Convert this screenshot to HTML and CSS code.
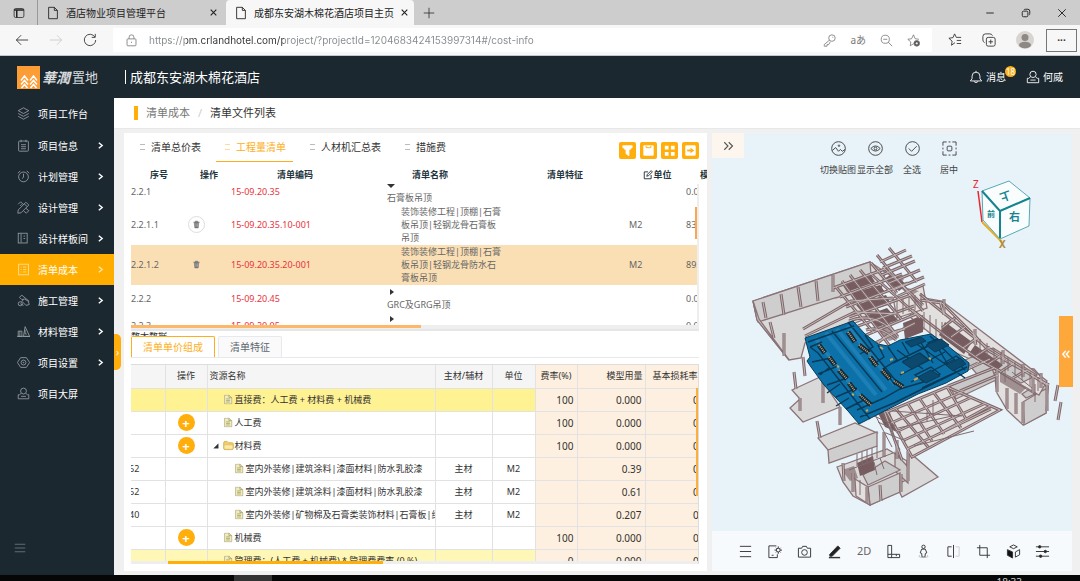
FILE: index.html
```html
<!DOCTYPE html>
<html lang="zh-CN">
<head>
    <meta charset="UTF-8">
    <meta name="viewport" content="width=device-width, initial-scale=1.0">
    <title>成都东安湖木棉花酒店项目主页</title>
    <link rel="stylesheet" href="styles.css">
</head>
<body>
    <!-- Icone condivise -->
    <svg class="sprite" aria-hidden="true">
        <symbol id="i-page" viewBox="0 0 16 16"><path d="M3 1.5h6.5L13 5v9.5H3zM9.5 1.5V5H13"/></symbol>
        <symbol id="i-close" viewBox="0 0 16 16"><path d="M3 3l10 10M13 3L3 13"/></symbol>
        <symbol id="i-arrow" viewBox="0 0 16 16"><path d="M5 3l6 5-6 5"/></symbol>
        <symbol id="i-user" viewBox="0 0 16 16"><circle cx="8" cy="5" r="3.6"/><path d="M5 8L3 9.5H1.5v5h13v-5H13L11 8M5 11.5h6"/></symbol>
        <symbol id="i-file" viewBox="0 0 16 16"><path d="M2.5 1h7L14 5v10h-11.500z" fill="#f1ecc0" stroke="#a8a070"/><path d="M5 7h6M5 9.500h6M5 12h6M9.500 1v4H14" stroke="#8c9250"/></symbol>
        <symbol id="i-folder" viewBox="0 0 16 16"><path d="M1 4q0-2 2-2h3l2 2h5q2 0 2 2v6q0 2-2 2H3q-2 0-2-2z" fill="#f0cf68" stroke="#c9a13c"/><path d="M1.500 7h13v5q0 1.500-2 1.500h-9q-2 0-2-1.500z" fill="#fbeaa6" stroke="#dcb95a"/></symbol>
        <symbol id="i-trash" viewBox="0 0 16 16"><path d="M2 4h12M6 4V2h4v2M4 4l1 10h6l1-10z" fill="#777"/><path d="M7 6v6M9.500 6v6" stroke="#ccc"/></symbol>
    </svg>

    <!-- Schede del browser -->
    <div class="tabbar">
        <button class="tab-menu" aria-label="标签操作"><svg viewBox="0 0 16 16"><rect x="1.500" y="2" width="13" height="12" rx="2"/><path d="M1.500 4h13M5 5v9" stroke-width="2"/></svg></button>
        <div class="tab">
            <svg viewBox="0 0 16 16"><use href="#i-page"/></svg><span>酒店物业项目管理平台</span>
            <button aria-label="关闭"><svg viewBox="0 0 16 16"><use href="#i-close"/></svg></button>
        </div>
        <div class="tab tab-active">
            <svg viewBox="0 0 16 16"><use href="#i-page"/></svg><span>成都东安湖木棉花酒店项目主页</span>
            <button aria-label="关闭"><svg viewBox="0 0 16 16"><use href="#i-close"/></svg></button>
        </div>
        <button class="tab-new" aria-label="新建标签"><svg viewBox="0 0 16 16"><path d="M8 1v14M1 8h14"/></svg></button>
        <div class="window-buttons">
            <button aria-label="最小化"><svg viewBox="0 0 16 16"><path d="M2 8h12"/></svg></button>
            <button aria-label="还原"><svg viewBox="0 0 16 16"><rect x="2" y="5" width="9" height="9" rx="2"/><path d="M5 3q0-1 2-1h4q3 0 3 3v4q0 2-1 2"/></svg></button>
            <button aria-label="关闭窗口"><svg viewBox="0 0 16 16"><path d="M2 2l12 12M14 2L2 14"/></svg></button>
        </div>
    </div>

    <!-- Barra degli indirizzi -->
    <div class="toolbar">
        <button aria-label="返回"><svg viewBox="0 0 16 16"><path d="M15 8H1.500M7 2.500L1.500 8 7 13.500"/></svg></button>
        <button class="off" aria-label="前进"><svg viewBox="0 0 16 16"><path d="M1 8h13.500M9 2.500L14.500 8 9 13.500"/></svg></button>
        <button aria-label="刷新"><svg viewBox="0 0 16 16"><path d="M13.500 4.500A6.500 6.500 0 1 0 14.500 8M14 1v4h-4"/></svg></button>
        <div class="address">
            <svg viewBox="0 0 16 16"><rect x="2.500" y="6" width="11" height="8.500" rx="1"/><path d="M5 6V4q0-3 3-3t3 3v2M8 9.500v1.500"/></svg>
            <input type="text" class="url" aria-label="地址" value="https://pm.crlandhotel.com/project/?projectId=1204683424153997314#/cost-info">
            <button aria-label="密码"><svg viewBox="0 0 16 16"><circle cx="11" cy="5" r="4"/><path d="M8 7.500L1.500 13v2H5v-2h2l2-3.500M11.500 4h1"/></svg></button>
            <button class="lang" aria-label="翻译">aあ</button>
            <button aria-label="缩小"><svg viewBox="0 0 16 16"><circle cx="6.500" cy="6.500" r="5"/><path d="M4 6.500h5M10 10l5 5"/></svg></button>
            <button aria-label="收藏"><svg viewBox="0 0 16 16"><path d="M8 12l-4 2.500.7-4.700L1 6.500l4.700-.7L8 1l2 4.800 4.700.7"/><circle cx="12" cy="11.500" r="3.500" fill="#555"/><path d="M10.500 11.500h3M12 10v3" stroke="#fff"/></svg></button>
        </div>
        <div class="browser-tools">
            <button aria-label="收藏夹"><svg viewBox="0 0 16 16"><path d="M8 11l-4 3 .7-4.700L1 6l4.700-.7L7.500 1l2 4h5.500M10 8.500h5M10 12h5"/></svg></button>
            <button aria-label="集锦"><svg viewBox="0 0 16 16"><rect x="5" y="5" width="10" height="10" rx="2"/><path d="M10 7.500v5M7.500 10h5M3 11Q1 10 1 8V4q0-3 3-3h5q2 0 3 2"/></svg></button>
            <button class="avatar" aria-label="个人资料"><svg viewBox="0 0 18 18"><circle cx="9" cy="9" r="9" fill="#d8d4cf"/><circle cx="9" cy="6.500" r="3.500" fill="#8d8883"/><ellipse cx="9" cy="14" rx="6" ry="3.200" fill="#8d8883"/></svg></button>
            <button class="more" aria-label="更多">···</button>
        </div>
    </div>

    <!-- Intestazione -->
    <header class="header">
        <a class="logo" href="#" aria-label="华润置地">
            <svg viewBox="0 0 23 23"><rect width="23" height="23" fill="#fd9d35"/><path d="M4 14.500l3.500-4.500 3.500 4.500M4 18.500l3.500-4 3.500 4M4.500 22l3-3.500 3 3.500M13 14.500l3.500-4.500 3.500 4.500M13 18.500l3.500-4 3.500 4M13.500 22l3-3.500 3 3.500" fill="none" stroke="#fff" stroke-width="1.500"/></svg>
            <b>華潤</b><span>置地</span>
        </a>
        <h1>成都东安湖木棉花酒店</h1>
        <a class="header-link messages" href="#"><svg viewBox="0 0 16 16"><path d="M1.500 12.500h13L12.500 10V7q0-4.500-4.500-4.500T3.500 7v3zM8 1v1.500M5.500 13q2.500 3 5 0"/></svg>消息<i>18</i></a>
        <a class="header-link" href="#"><svg viewBox="0 0 16 16"><use href="#i-user"/></svg>何威</a>
    </header>

    <div class="layout">
        <nav class="sidebar">
            <a class="first" href="#"><svg viewBox="0 0 16 16"><path d="M8 1l6.500 3.500L8 8 1.500 4.500zM1.500 8L8 11.500 14.500 8M1.500 11.500L8 15l6.500-3.500"/></svg>项目工作台</a>
            <a href="#"><svg viewBox="0 0 16 16"><rect x="2" y="2.500" width="12" height="12.500" rx="1"/><path d="M5 1v3M11 1v3M5 7h6M5 9.500h6M5 12h6"/></svg>项目信息<svg class="arrow" viewBox="0 0 16 16"><use href="#i-arrow"/></svg></a>
            <a href="#"><svg viewBox="0 0 16 16"><circle cx="8" cy="8.500" r="6"/><path d="M8 4.500V9l-2 1.500M1 4l3-3M15 4l-3-3"/></svg>计划管理<svg class="arrow" viewBox="0 0 16 16"><use href="#i-arrow"/></svg></a>
            <a href="#"><svg viewBox="0 0 16 16"><path d="M11 1.500L14.500 5 5 14.500l-4 .5.500-4zM1.500 4l3-3 3.500 3.500M4 6l2-2M11 9l3.500 3-3 3L8 12M9 3.500L12.500 7"/></svg>设计管理<svg class="arrow" viewBox="0 0 16 16"><use href="#i-arrow"/></svg></a>
            <a href="#"><svg viewBox="0 0 16 16"><rect x="1.500" y="1.500" width="11" height="12"/><path d="M5 2v11M8 5h2M8 8h2"/></svg>设计样板间<svg class="arrow" viewBox="0 0 16 16"><use href="#i-arrow"/></svg></a>
            <a class="active" href="#"><svg viewBox="0 0 16 16"><rect x="2" y="1.500" width="12" height="13"/><path d="M4.500 5h1M7.500 5h4M4.500 8h1M7.500 8h4M4.500 11h1M7.500 11h4"/></svg>清单成本<svg class="arrow" viewBox="0 0 16 16"><use href="#i-arrow"/></svg></a>
            <a href="#"><svg viewBox="0 0 16 16"><circle cx="4" cy="12" r="2.500"/><path d="M3 4l3-2.500 9 7.500M3 4l3 3 2-1M6 9l5 5 4-1-1-4-5-3zM4 12l4 2"/></svg>施工管理<svg class="arrow" viewBox="0 0 16 16"><use href="#i-arrow"/></svg></a>
            <a href="#"><svg viewBox="0 0 16 16"><path d="M1.500 7.500H6V14H1.500zM8 14l2-12 5.500 12zM3.500 7.500V14M10 6v5h2M0 14h16"/></svg>材料管理<svg class="arrow" viewBox="0 0 16 16"><use href="#i-arrow"/></svg></a>
            <a href="#"><svg viewBox="0 0 16 16"><path d="M4.500 2h7L15.500 8l-4 6h-7L.5 8z"/><circle cx="8" cy="8" r="3"/><circle cx="8" cy="8" r=".5"/></svg>项目设置<svg class="arrow" viewBox="0 0 16 16"><use href="#i-arrow"/></svg></a>
            <a href="#"><svg viewBox="0 0 16 16"><use href="#i-user"/></svg>项目大屏</a>
            <button class="menu-toggle" aria-label="折叠菜单"><svg viewBox="0 0 16 16"><path d="M1 3h14M1 8h14M1 13h14"/></svg></button>
        </nav>

        <main class="main">
            <div class="breadcrumb"><a href="#">清单成本</a><i>/</i><span>清单文件列表</span></div>
            <button class="side-handle" aria-label="展开">›</button>

            <div class="work">
                <section class="lists">
                    <!-- Elenco principale -->
                    <div class="list-top">
                        <div class="list-tabs">
                            <button>清单总价表</button>
                            <button class="selected">工程量清单</button>
                            <button>人材机汇总表</button>
                            <button>措施费</button>
                        </div>
                        <div class="actions">
                            <button aria-label="筛选"><svg viewBox="0 0 16 16"><path d="M3 3h10v1.500L9.500 8v5.500l-3-2V8L3 4.500z" fill="#fff"/></svg></button>
                            <button aria-label="保存"><svg viewBox="0 0 16 16"><path d="M3 3h10v10H3z" fill="#fff"/><path d="M5.500 3v2h5V3" stroke="#ffae0c"/></svg></button>
                            <button aria-label="视图"><svg viewBox="0 0 16 16"><path d="M3 3h4v4H3zM9.500 3h4v4h-4zM3 9.500h4v4H3zM9.500 9.500h4v4h-4z" fill="#fff" stroke="none"/></svg></button>
                            <button aria-label="导出"><svg viewBox="0 0 16 16"><path d="M3 3h10v10H3z" fill="#fff"/><path d="M4.500 8h4" stroke="#ffae0c" stroke-width="2"/><path d="M8 5l4 3-4 3z" fill="#ffae0c" stroke="none"/></svg></button>
                        </div>
                    </div>
                    <div class="bill">
                        <table class="bill-table bill-head">
                            <colgroup><col class="c-no"><col class="c-op"><col class="c-code"><col class="c-name"><col class="c-code"><col class="c-unit"><col class="c-qty"></colgroup>
                            <tr><th>序号</th><th>操作</th><th>清单编码</th><th>清单名称</th><th>清单特征</th><th><svg viewBox="0 0 16 16"><path d="M8 3H2v11h11V8M6 10l1-3 6-6 2 2-6 6z"/></svg>单位</th><th class="left">模型量</th></tr>
                        </table>
                        <div class="bill-scroll">
                            <table class="bill-table">
                                <colgroup><col class="c-no"><col class="c-op"><col class="c-code"><col class="c-name"><col class="c-code"><col class="c-unit"><col class="c-qty"></colgroup>
                                <tr><td>2.2.1</td><td></td><td class="red">15-09.20.35</td><td class="parent"><i class="down"></i>石膏板吊顶</td><td></td><td></td><td>0.000</td></tr>
                                <tr><td>2.2.1.1</td><td><button class="trash ring" aria-label="删除"><svg viewBox="0 0 16 16"><use href="#i-trash"/></svg></button></td><td class="red">15-09.20.35.10-001</td><td class="child">装饰装修工程|顶棚|石膏板吊顶|轻钢龙骨石膏板吊顶</td><td></td><td>M2</td><td>83.20</td></tr>
                                <tr class="current"><td>2.2.1.2</td><td><button class="trash" aria-label="删除"><svg viewBox="0 0 16 16"><use href="#i-trash"/></svg></button></td><td class="red">15-09.20.35.20-001</td><td class="child">装饰装修工程|顶棚|石膏板吊顶|轻钢龙骨防水石膏板吊顶</td><td></td><td>M2</td><td>89.40</td></tr>
                                <tr><td>2.2.2</td><td></td><td class="red">15-09.20.45</td><td class="parent"><i class="next"></i>GRC及GRG吊顶</td><td></td><td></td><td>0.000</td></tr>
                                <tr><td>2.2.3</td><td></td><td class="red">15-09.20.05</td><td class="parent"><i class="next"></i>其他吊顶</td><td></td><td></td><td>0.000</td></tr>
                            </table>
                            <div class="bill-thumb"></div>
                        </div>
                        <div class="bill-track"><div></div></div>
                    </div>
                    <div class="splitter"></div>

                    <!-- Dettaglio del prezzo -->
                    <div class="total">数大数据</div>
                    <div class="detail-tabs">
                        <button class="selected">清单单价组成</button>
                        <button>清单特征</button>
                    </div>
                    <div class="grid">
                        <table>
                            <colgroup><col class="g-code"><col class="g-op"><col class="g-name"><col class="g-main"><col class="g-unit"><col class="g-rate"><col class="g-qty"><col class="g-loss"></colgroup>
                            <tr><th></th><th>操作</th><th class="left">资源名称</th><th>主材/辅材</th><th>单位</th><th class="cream">费率(%)</th><th class="cream right">模型用量</th><th class="cream loss">基本损耗率</th></tr>
                            <tr class="yellow"><td></td><td></td><td class="lv1"><svg viewBox="0 0 16 16"><use href="#i-file"/></svg>直接费：人工费 + 材料费 + 机械费</td><td></td><td></td><td>100</td><td>0.000</td><td>0.000</td></tr>
                            <tr><td></td><td><button class="add" aria-label="添加">+</button></td><td class="lv1"><svg viewBox="0 0 16 16"><use href="#i-file"/></svg>人工费</td><td></td><td></td><td>100</td><td>0.000</td><td>0.000</td></tr>
                            <tr><td></td><td><button class="add" aria-label="添加">+</button></td><td class="open"><svg class="fold" viewBox="0 0 16 16"><path d="M14 2v12H2z"/></svg><svg class="folder" viewBox="0 0 16 16"><use href="#i-folder"/></svg>材料费</td><td></td><td></td><td>100</td><td>0.000</td><td>0.000</td></tr>
                            <tr><td>62</td><td></td><td class="lv2"><svg viewBox="0 0 16 16"><use href="#i-file"/></svg>室内外装修|建筑涂料|漆面材料|防水乳胶漆</td><td>主材</td><td>M2</td><td></td><td>0.39</td><td>0.000</td></tr>
                            <tr><td>62</td><td></td><td class="lv2"><svg viewBox="0 0 16 16"><use href="#i-file"/></svg>室内外装修|建筑涂料|漆面材料|防水乳胶漆</td><td>主材</td><td>M2</td><td></td><td>0.61</td><td>0.000</td></tr>
                            <tr><td>40</td><td></td><td class="lv2"><svg viewBox="0 0 16 16"><use href="#i-file"/></svg>室内外装修|矿物棉及石膏类装饰材料|石膏板|纸面</td><td>主材</td><td>M2</td><td></td><td>0.207</td><td>0.000</td></tr>
                            <tr><td></td><td><button class="add" aria-label="添加">+</button></td><td class="lv1"><svg viewBox="0 0 16 16"><use href="#i-file"/></svg>机械费</td><td></td><td></td><td>100</td><td>0.000</td><td>0.000</td></tr>
                            <tr class="yellow pale"><td></td><td></td><td class="lv1"><svg viewBox="0 0 16 16"><use href="#i-file"/></svg>管理费：(人工费 + 机械费) * 管理费费率 (0 %)</td><td></td><td></td><td>0</td><td>0.000</td><td>0.000</td></tr>
                        </table>
                        <div class="grid-thumb-y"></div>
                        <div class="grid-track"><div></div></div>
                    </div>
                </section>

                <!-- Vista del modello -->
                <section class="viewer">
                    <div class="stage">
                        <svg class="model" viewBox="712 133 360 398" role="img" aria-label="三维模型">
                            <defs>
                                <path id="beams-top" d="M871 263l26 30M877 255l46 56M889 248l28 34M883 267l40 38M870 273l50 45M860 270l42 50M850 275l48 62M842 281l50 68M836 287l38 46M880 262l26-12M883 268l29-12M882 275l33-14M889 283l31-13M893 290l31-13M898 296l27-12M833 288l52-19M840 297l62-23M846 307l62-24M849 317l62-22M858 326l56-20M866 335l50-21M875 343l40-20M803 329l48-28 42-3M805 336l50-24 44 2M849 321q25-10 46 12M866 330q15-5 30 10M878 343q12-12 27-14"/>
                                <path id="beams-right" d="M920 294l30 24 35 28 62 39M912 310l34 26 34 24 20 11M920 300l22 3 33 33 14 15 60 34M940 302l4 12M973 332l3 13M955 318l-13 10M965 327l-14 10M977 338l-14 10M990 347l-14 9M1002 355l-14 9M1014 363l-14 9M1027 370l-14 8"/>
                                <path id="beams-stair" d="M887 412l60-25 53 23-88 47zM896 409l32 38M908 404l24 37M920 399l24 35M934 393l27 35M947 387l19 32M891 423l73-32M896 432l76-35M902 441l84-38M907 449l84-40M948 386l46-18M960 391l38-16M887 412l-12-10M944 431l46-25M882 405l20 55M946 379l44-20M932 385l46-22"/>
                                <path id="posts" d="M763 302l3 16M781 294l3 21M798 287l3 20M816 281l2 20M833 275v17M784 333v23M770 322l4 16M794 372l2 17M800 398v13M823 376v27M817 421l3 17M840 407v18M843 463l1 18M853 473v19M867 487v16M880 485l1 16M901 474v18M884 432v25M897 440v19M908 451v30M997 370v22M1007 388v21M1016 393v21M1023 402v21M1047 383v28M1058 385l-3 16M1061 402l-3 18M944 299v16M975 329v15M1003 350v14M1023 364v13M1041 373v15M1033 374v18M803 357l2 19"/>
                            </defs>

                            <!-- solai e pareti -->
                            <g class="slabs">
                                <path d="M753 301l117-39 15 10-10 43-70 28-4 15-12 2-32-40z"/>
                                <path class="wall" d="M753 301l117-39 2 27-37 9-77 24z"/>
                                <path class="wall" d="M753 301l6 18 30 41-32-40z"/>
                                <path d="M792 390l28-13 20 30-37 15-13-14 10-9z"/>
                                <path d="M818 438l37-15 22 10-49 17z"/>
                                <path class="wall" d="M828 450l49-18v14l-48 17z"/>
                                <path d="M837 467l50-18 20 12-2 28-35 16-17-9-10-14z"/>
                                <path d="M909 452l29 25-36 20-6-12 12-6z"/>
                                <path class="wall" d="M895 453l13 14v16l-13-12z"/>
                                <path class="wall" d="M868 487l32-14v19l-30 13z"/>
                                <path class="light" d="M855 479l13 8 2 18-14-9z"/>
                                <path class="floor" d="M863 475l22-14 15 9-32 15z"/>
                                <path d="M887 412l60-25 53 23-88 47z" class="light"/>
                                <path d="M993 366l4 27 10 17 16 15 23-12 2-28-14-16z" class="light"/>
                                <path class="wall" d="M1023 402l25-15-2 26-22 12z"/>
                                <path class="floor" d="M1022 394l19-12 7 6-22 10z"/>
                                <path class="light" d="M912 296l30 5 105 80-8 14-42-24-45-20-42-34z"/>
                                <path class="floor" d="M965 360l28-12 44 27-16 8-22-12-18 8z"/>
                                <path class="floor" d="M950 386l42-18 4 12-40 19z"/>
                                <path class="light" d="M893 298l30-12 4 22-30 10z"/>
                            </g>
                            <path class="shade" d="M842 284l28-10 5 8-28 10zM850 294l30-9 5 7-30 10zM856 305l30-10 5 9-28 9zM865 316l22-8 11 12-20 7zM893 273l14 12-8 6-15-12zM903 323l20-8v17l-18 7zM945 322l27 20-8 12-25-19zM975 345l28 20-7 6-28-16zM872 401l17 9 8 22-12-5zM857 463l16-7 2 14-15 6z"/>
                            <path class="shade" d="M885 271l19 8-5 8zM897 285l22 6-9 5zM876 327l13 14 10-3-12-13zM1000 372l26 16-6 6-20-12zM842 470l12-4 4 12-8 3z" opacity=".6"/>

                            <!-- travi: bordo scuro e anima chiara -->
                            <g class="beam-edge"><use href="#beams-top"/><use href="#beams-right"/><use href="#beams-stair"/><use href="#posts"/></g>
                            <g class="beam-core"><use href="#beams-top"/><use href="#beams-right"/><use href="#beams-stair"/><use href="#posts"/></g>
                            <path class="thin" d="M897 301v15M903 299v15M909 297v15M915 295v15M921 293v15M924 312v18M930 315v19M936 319v18M942 322v19M980 339v14M987 343v14M994 348v14M1001 352v14M1008 357v14M1015 362v13M1022 366v14M1030 372v14M1038 377v14M857 454v12M862 452v12M867 450v12M872 448v12M877 446v12M849 470l44-17M860 480v15M874 462l3 13M880 458l4 11M1000 373l36 22M1012 372l20 16M1005 368v14M1035 384v18M892 411l70 5M898 428l54-12M914 446l60-15M933 400v16M927 412v9M872 409l20 38M877 400l23 50M884 412l-10 4 22 10M878 422l23 11M886 433l20 8"/>

                            <!-- controsoffitto selezionato -->
                            <g class="ceiling">
                                <path d="M805 338l48-17 12 13 13 10 10 2 12-6 31-6 17 12 21 17-1 8-22 12-28 11-59 30-11-13-24-26-13-18-4-6 3-4z"/>
                                <path class="stripe" d="M826 333l50 62M837 329l49 61M847 326l48 59M815 338l52 67"/>
                                <path class="dark" d="M832 331l50 61M808 342l46-16M810 347l8 6 52 66M812 362l19-4M818 374l20-8M827 385l20-7M836 397l21-9M846 409l20-10M860 417l34-14 73-36M857 410l27-12 16-9 27-8M822 342l-12 5M830 367l-10 8M840 384l-13 9M849 398l-13 8M848 322l52 64M865 335l8 12-13 7M878 345l6 12-12 8M888 347l9 13-14 9 12 16M911 340l54 38M930 336l35 34M897 350l26 19M893 363l37-18M900 375l45-23M911 382l44-23M922 388l45-21M902 342l7 12M920 341l13 22M938 348l12 20M904 361l16-8 9 7-16 8zM915 375l16-8 9 7-16 8zM928 343l9-4 7 5-9 5zM944 363l12-7 7 5-13 7z"/>
                                <path class="block" d="M905 342l16-5 5 4-15 6zM926 345l15-6 8 6-14 7zM902 362l17-9 9 7-16 9zM946 365l14-7 6 6-13 7zM918 377l13-7 9 6-14 7z"/>
                                <path class="duct-edge" d="M819 345l6 8M829 357l6 8M839 370l8 9M849 383l6 8M860 395l11 10M848 332l7 10M859 345l10 8M870 357l7 9M882 370l8 9M894 381l9 6"/>
                                <path class="duct" d="M819 345l6 8M829 357l6 8M839 370l8 9M849 383l6 8M860 395l11 10M848 332l7 10M859 345l10 8M870 357l7 9M882 370l8 9M894 381l9 6"/>
                                <path class="spots" d="M837 366l2 1M852 394l2 1M880 347l3 2M890 360l3-1M901 373l3-1M914 380l4-2M929 358l2 1M866 411l2-1"/>
                            </g>

                            <!-- cubo di orientamento -->
                            <path d="M978 191l4 31" stroke="#e8262b" stroke-width="1.500"/>
                            <path d="M982 222l20 20" stroke="#e9ad22" stroke-width="2"/>
                            <g class="cube">
                                <path d="M982 191l27-10 21 17-30 13z"/>
                                <path d="M982 191l18 20v28l-17-19z"/>
                                <path d="M1000 211l30-13-1 28-29 13z"/>
                                <path class="cube-edge" d="M982 191l18 20 30-13M1000 211v27"/>
                            </g>
                            <text class="axis-z" x="973" y="188">Z</text>
                            <text class="axis-x" x="999" y="248">X</text>
                            <text class="face" x="1009" y="221">右</text>
                            <text class="face" x="-5" y="4" transform="translate(1006 196) rotate(160)">上</text>
                            <text class="face face-small" x="987" y="217">前</text>
                        </svg>
                        <div class="stage-top">
                            <button class="expand" aria-label="收起"><svg viewBox="0 0 16 16"><path d="M3 3l5 5-5 5M9 3l5 5-5 5"/></svg></button>
                            <div class="view-tools">
                                <button><svg viewBox="0 0 16 16"><circle cx="8" cy="8" r="7.300"/><path d="M1.500 10l3.500-3 3 4 2-2 2 2 3-2"/><circle cx="8.500" cy="5" r=".8"/></svg>切换贴图</button>
                                <button><svg viewBox="0 0 16 16"><circle cx="8" cy="8" r="7.300"/><path d="M3 8q5-5.500 10 0-5 5.500-10 0z"/><circle cx="8" cy="8" r="1.500"/></svg>显示全部</button>
                                <button><svg viewBox="0 0 16 16"><circle cx="8" cy="8" r="7.300"/><path d="M4 8l3 3 5.500-5.500"/></svg>全选</button>
                                <button><svg viewBox="0 0 16 16"><path d="M1 5V1h4M7 1h2M11 1h4v4M15 7v2M15 11v4h-4M9 15H7M5 15H1v-4M1 9V7"/><rect x="5.500" y="5.500" width="5" height="5" rx="1"/></svg>居中</button>
                            </div>
                        </div>
                        <button class="right-handle" aria-label="打开面板">«</button>
                    </div>
                    <div class="stage-bar">
                        <button aria-label="列表"><svg viewBox="0 0 16 16"><path d="M2 2.500h12M2 8h12M2 13.500h12"/></svg></button>
                        <button aria-label="属性"><svg viewBox="0 0 16 16"><path d="M10 2H2v12.500h9V11M5 12h2"/><circle cx="12" cy="6.500" r="2"/><path d="M12 2.500v2M12 8.500v2M8 6.500h2M14 6.500h2M9.500 4l1 1M13.500 8l1 1M14.500 4l-1 1M10.500 8l-1 1"/></svg></button>
                        <button aria-label="截图"><svg viewBox="0 0 16 16"><path d="M1.500 4.500H5L6 2.500h4l1 2h3.500v9.500h-13z"/><circle cx="8" cy="9" r="3"/></svg></button>
                        <button aria-label="标注"><svg viewBox="0 0 16 16"><path d="M3 11l8.500-9 2.500 2.500L5.500 13H3z" fill="#222"/><path d="M2 14.500h12" stroke-width="1.500"/></svg></button>
                        <button class="two-d">2D</button>
                        <button aria-label="测量"><svg viewBox="0 0 16 16"><path d="M2 1.500h4V11h8.500v3.500H2zM2 11h4v3.500M11 11v2"/></svg></button>
                        <button aria-label="漫游"><svg viewBox="0 0 16 16"><circle cx="8" cy="3" r="1.800"/><path d="M6 5.500h4l1.500 4-1.500.5-.5 4h-3L6 10l-1.500-.5z"/><path d="M4 12q-3 2 4 2.500 7-.5 4-2.500" stroke="#bbb"/></svg></button>
                        <button aria-label="剖切"><svg viewBox="0 0 16 16"><path d="M6 3H2v10h4M8 1v14"/><path d="M10 3h4v10h-4" stroke="#ccc"/></svg></button>
                        <button aria-label="裁剪"><svg viewBox="0 0 16 16"><path d="M4 1v11h11M1 4h11v11"/></svg></button>
                        <button aria-label="构件"><svg viewBox="0 0 16 16"><path d="M8 1l4 2-4 2-4-2z"/><path d="M1.500 6L7 8.500V15l-5.500-3z" fill="#111"/><path d="M14.500 6L10 8.500V14l4.500-2.500z"/></svg></button>
                        <button aria-label="设置"><svg viewBox="0 0 16 16"><path d="M1 3h14M1 8h14M1 13h14"/><circle cx="5" cy="3" r="1.300" fill="#222"/><circle cx="11" cy="8" r="1.300" fill="#222"/><circle cx="6" cy="13" r="1.300" fill="#222"/></svg></button>
                    </div>
                </section>
            </div>
        </main>
    </div>
    <div class="taskbar"><div class="task"></div><span>18:33</span></div>
</body>
</html>
```

FILE: styles.css
```css
* {
    box-sizing: border-box;
}
body {
    margin: 0;
    height: 100vh;
    display: flex;
    flex-direction: column;
    overflow: hidden;
    font-family: "Noto Sans", "Noto Sans CJK SC", sans-serif;
    font-size: 10px;
    line-height: 16px;
    color: #333;
}
button {
    border: 0;
    padding: 0;
    background: none;
    font: inherit;
    color: inherit;
    display: flex;
    align-items: center;
    justify-content: center;
    cursor: pointer;
}
a {
    color: inherit;
    text-decoration: none;
}
i {
    font-style: normal;
}
svg {
    width: 12px;
    height: 12px;
    flex: none;
    fill: none;
    stroke: currentColor;
}
.sprite {
    position: absolute;
    width: 0;
    height: 0;
}

/* browser */
.tabbar {
    display: flex;
    align-items: stretch;
    flex: none;
    height: 25px;
    background: #cdcdcd;
    color: #222;
}
.tab-menu {
    width: 38px;
    border-right: 1px solid #999;
}
.tab {
    display: flex;
    align-items: center;
    width: 188px;
    padding: 0 8px;
    gap: 6px;
}
.tab svg {
    width: 14px;
    height: 14px;
}
.tab span {
    white-space: nowrap;
}
.tab button {
    margin-left: auto;
}
.tab button svg {
    width: 9px;
    height: 9px;
    stroke-width: 2;
}
.tab-active {
    background: #f7f7f7;
    border-radius: 4px 4px 0 0;
}
.tab-new {
    width: 30px;
}
.window-buttons {
    margin-left: auto;
    display: flex;
}
.window-buttons button {
    width: 36px;
}
.window-buttons svg {
    width: 10px;
    height: 10px;
    stroke-width: 1.5;
}
.toolbar {
    display: flex;
    align-items: center;
    flex: none;
    height: 31px;
    background: #f7f7f7;
    border-bottom: 1px solid #c4c8ca;
    padding: 0 3px 0 5px;
}
.toolbar > button {
    width: 34px;
}
.toolbar svg {
    width: 14px;
    height: 14px;
}
.toolbar .off {
    color: #ccc;
}
.address {
    flex: 1;
    display: flex;
    align-items: center;
    height: 24px;
    margin-left: 6px;
    padding: 0 12px 0 12px;
    background: #fff;
    color: #777;
    gap: 14px;
}
.address svg {
    width: 13px;
    height: 13px;
}
.url {
    flex: 1;
    min-width: 0;
    border: 0;
    padding: 0;
    margin-left: -3px;
    font-family: Inter, sans-serif;
    font-size: 10px;
    line-height: 16px;
    color: transparent;
    background: linear-gradient(90deg, #85898c 37px, #333 37px, #333 135px, #85898c 135px);
    -webkit-background-clip: text;
    background-clip: text;
}
.browser-tools {
    display: flex;
    align-items: center;
    gap: 20px;
    padding-left: 16px;
}
.browser-tools .avatar svg {
    width: 18px;
    height: 18px;
    stroke: none;
}
.more {
    width: 31px;
    height: 23px;
    margin-left: -8px;
    border: 1px solid #777;
    font-weight: bold;
}

/* header */
.header {
    display: flex;
    align-items: center;
    flex: none;
    height: 42px;
    padding: 0 17px;
    background: #1c2830;
    color: #fff;
}
.logo {
    display: flex;
    align-items: center;
    width: 108px;
    color: #d8dcdf;
    white-space: nowrap;
}
.logo svg {
    width: 23px;
    height: 23px;
    stroke: none;
}
.logo b {
    font: bold italic 14px "Noto Sans CJK TC", serif;
    margin: 0 2px;
}
.logo span {
    font-size: 13px;
}
.header h1 {
    margin: 0 auto 0 0;
    padding-left: 4px;
    border-left: 1px solid #fff;
    font-size: 13px;
    line-height: 14px;
    font-weight: normal;
}
.header-link {
    display: flex;
    align-items: center;
    gap: 3px;
}
.header-link svg {
    width: 14px;
    height: 14px;
}
.messages {
    position: relative;
    margin-right: 20px;
}
.messages i {
    position: absolute;
    left: 36px;
    top: -3px;
    min-width: 11px;
    height: 11px;
    border-radius: 6px;
    background: #fbb01b;
    font-size: 8px;
    line-height: 11px;
    text-align: center;
}

/* sidebar */
.layout {
    flex: 1;
    min-height: 0;
    display: flex;
}
.sidebar {
    width: 114px;
    flex: none;
    display: flex;
    flex-direction: column;
    background: #1c2830;
    color: #fff;
}
.sidebar a {
    display: flex;
    align-items: center;
    height: 31px;
    padding: 0 9px 0 17px;
    gap: 8px;
}
.sidebar a svg {
    width: 13px;
    height: 13px;
    color: #9aa3a8;
}
.sidebar a .arrow {
    width: 9px;
    height: 9px;
    margin-left: auto;
    color: #fff;
    stroke-width: 2.5;
}
.sidebar .first {
    margin-bottom: 1px;
}
.sidebar .active {
    background: #ffae00;
}
.sidebar .active svg {
    color: #ffe3a3;
}
.menu-toggle {
    margin: auto 0 21px 12px;
    width: 15px;
    color: #77848c;
}

/* main */
.main {
    flex: 1;
    min-width: 0;
    display: flex;
    flex-direction: column;
    background: #f0f0f0;
    position: relative;
}
.breadcrumb {
    display: flex;
    align-items: center;
    flex: none;
    height: 31px;
    padding-left: 20px;
    background: #fff;
    font-size: 11px;
    border-bottom: 1px solid #e8e8e8;
}
.breadcrumb::before {
    content: "";
    width: 4px;
    height: 14px;
    margin-right: 8px;
    background: #ffae0c;
}
.breadcrumb a {
    color: #777;
}
.breadcrumb i {
    margin: 0 8px;
    color: #ccc;
}
.side-handle {
    position: absolute;
    left: 0;
    top: 236px;
    width: 7px;
    height: 36px;
    border-radius: 0 5px 5px 0;
    background: #ffae0c;
    color: #fff;
}
.work {
    flex: 1;
    min-height: 0;
    display: grid;
    grid-template-columns: minmax(0, 583fr) minmax(0, 360fr);
    gap: 5px;
    padding: 4px 8px 4px 10px;
}

/* upper list */
.lists {
    display: flex;
    flex-direction: column;
    padding: 0 8px 7px 7px;
    background: #fff;
    overflow: hidden;
    min-height: 0;
}
.list-top {
    display: flex;
    justify-content: space-between;
    align-items: center;
    flex: none;
    height: 29px;
}
.list-tabs {
    display: flex;
    align-self: stretch;
    gap: 8px;
}
.list-tabs button {
    padding: 0 7px 0 9px;
    gap: 6px;
    border-bottom: 1px solid transparent;
}
.list-tabs button::before {
    content: "";
    width: 5px;
    height: 4px;
    border: solid #bbb;
    border-width: 1px 0;
}
.list-tabs .selected {
    color: #fdae1c;
    border-color: #fdae1c;
}
.list-tabs .selected::before {
    border-color: #fddc9c;
}
.actions {
    display: flex;
    gap: 4px;
    padding-top: 5px;
}
.actions button {
    width: 17px;
    height: 17px;
    border-radius: 2px;
    background: #ffae0c;
    color: #fff;
}
.actions svg {
    width: 15px;
    height: 15px;
}
.bill {
    flex: none;
}
.bill-table {
    width: 620px;
    table-layout: fixed;
    border-collapse: collapse;
    font-size: 9px;
    line-height: 13px;
}
.bill-head {
    height: 22px;
    color: #24343c;
}
.bill-table th,
.bill-table td {
    padding: 0 0 1px;
    text-align: left;
    white-space: nowrap;
}
.bill-table th {
    padding: 2px 0 0;
    text-align: center;
}
.bill-table th.left {
    text-align: left;
    padding-left: 14px;
}
.bill-table th svg {
    width: 10px;
    height: 10px;
    vertical-align: -2px;
    stroke-width: 1.5;
}
.c-no { width: 56px; }
.c-op { width: 44px; }
.c-code { width: 128px; }
.c-name { width: 142px; }
.c-unit { width: 57px; }
.c-qty { width: 65px; }
.bill-scroll {
    position: relative;
    height: 141px;
    overflow: hidden;
    border-right: 2px solid #eee;
}
.bill-scroll .bill-table {
    margin-top: -6px;
    color: #666;
}
.bill-table .red {
    color: #e8323c;
}
.bill-table .parent {
    padding-left: 28px;
}
.bill-table .child {
    padding-left: 42px;
    white-space: normal;
}
.current {
    background: #fbdfb4;
}
.parent i {
    display: block;
    height: 13px;
}
.parent i::before {
    content: "";
    display: inline-block;
    border: 4px solid transparent;
}
.parent .down::before {
    border-top-color: #333;
    border-bottom: 0;
}
.parent .next::before {
    margin-left: 3px;
    border-width: 3px 4px;
    border-left-color: #333;
    border-right: 0;
}
.trash {
    width: 17px;
    height: 17px;
    margin-left: 1px;
    color: #777;
}
.trash svg {
    width: 9px;
    height: 9px;
}
.ring {
    border: 1px solid #ddd;
    border-radius: 50%;
    background: #fff;
}
.bill-thumb {
    position: absolute;
    right: 0;
    top: 23px;
    width: 2px;
    height: 32px;
    background: #fda64f;
}
.bill-track {
    height: 4px;
    background: #eee;
}
.bill-track div {
    width: 51%;
    height: 3px;
    background: #fdb768;
}
.splitter {
    flex: none;
    height: 2px;
    margin-bottom: 1px;
    background: #e6e6e6;
}

/* price detail */
.total {
    flex: none;
    height: 4px;
    overflow: hidden;
    font-size: 9px;
    line-height: 8px;
}
.detail-tabs {
    display: flex;
    flex: none;
    gap: 3px;
    margin-bottom: 6px;
    border-bottom: 1px solid #e6e9ee;
}
.detail-tabs button {
    height: 21px;
    padding: 0 11px;
    background: #fafafa;
    border: 1px solid #e6e9ee;
    border-bottom: 0;
    border-radius: 2px 2px 0 0;
    color: #5c6770;
}
.detail-tabs .selected {
    background: #fff;
    border-color: #fdae1c;
    color: #fdae1c;
}
.grid {
    flex: 1;
    min-height: 0;
    position: relative;
    overflow: hidden;
    border: 1px solid #ddd;
    border-width: 1px 1px 0 0;
}
.grid table {
    width: 591px;
    table-layout: fixed;
    border-collapse: collapse;
    font-size: 9px;
    line-height: 14px;
}
.grid th,
.grid td {
    height: 23px;
    padding: 0 3px;
    border-right: 1px solid #e2e2e2;
    border-bottom: 1px solid #e2e2e2;
    text-align: center;
    font-weight: normal;
    white-space: nowrap;
    overflow: hidden;
}
.grid th {
    background: #f5f5f5;
    padding: 0 2px;
}
.grid td:first-child,
.grid .lv1,
.grid .lv2,
.grid .open,
.grid .left {
    text-align: left;
}
.grid td:first-child {
    padding: 0;
    text-indent: -2px;
}
.grid td:nth-child(n+6) {
    background: #fef0e1;
    text-align: right;
    font-size: 10px;
}
.grid .cream {
    background: #fef0e1;
}
.grid .right {
    text-align: right;
}
.grid .loss {
    text-align: left;
    padding-left: 7px;
}
.grid .lv1 { padding-left: 15px; }
.grid .lv2 { padding-left: 26px; }
.grid .open { padding-left: 5px; }
.grid td svg {
    width: 10px;
    height: 11px;
    margin-right: 2px;
    vertical-align: -2px;
}
.grid td .fold {
    width: 6px;
    height: 6px;
    margin-right: 4px;
    vertical-align: 0;
    fill: #333;
}
.grid td .folder {
    width: 11px;
    margin-right: 1px;
}
.grid .yellow td:nth-child(-n+5) {
    background: #fff293;
}
.grid .pale td:nth-child(-n+5) {
    background: #fff7b5;
}
.g-code { width: 34px; }
.g-op { width: 42px; }
.g-name { width: 228px; }
.g-main { width: 57px; }
.g-unit { width: 43px; }
.g-rate { width: 42px; }
.g-qty { width: 68px; }
.g-loss { width: 77px; }
.add {
    width: 17px;
    height: 17px;
    margin: 0 auto;
    border-radius: 50%;
    background: #ffae0c;
    color: #fff;
    font-size: 13px;
    font-weight: bold;
}
.grid-thumb-y {
    position: absolute;
    right: 0;
    top: 23px;
    width: 2px;
    height: 108px;
    background: #fbb040;
}
.grid-track {
    position: absolute;
    left: 0;
    right: 0;
    bottom: 0;
    height: 3px;
    background: #eee;
}
.grid-track div {
    width: 38%;
    height: 3px;
    margin-left: 37px;
    background: #ffae0c;
}

/* 3D viewer */
.viewer {
    display: flex;
    flex-direction: column;
    min-height: 0;
}
.stage {
    position: relative;
    flex: 1;
    min-height: 0;
    background: #e7f2f9;
}
.model {
    position: absolute;
    left: 0;
    top: 0;
    width: 100%;
    height: 100%;
    stroke: none;
}
.slabs path {
    fill: #dad9d9;
    stroke: #8b7477;
    stroke-width: 1.3;
}
.slabs .wall { fill: #cfcece; }
.slabs .light { fill: #e2dfdf; }
.slabs .floor { fill: #c9c8c8; }
.shade { fill: #765c5f; }
.beam-edge {
    stroke: #7f676a;
    stroke-width: 3;
}
.beam-core {
    stroke: #c3b8b9;
    stroke-width: 1;
}
.thin { stroke: #806a6d; }
.ceiling path {
    fill: #0b71a8;
    stroke: #0a3c58;
}
.ceiling .stripe,
.ceiling .dark,
.ceiling .duct,
.ceiling .duct-edge,
.ceiling .spots {
    fill: none;
}
.ceiling .stripe {
    stroke: #1c80b6;
    stroke-width: 4;
}
.ceiling .dark {
    stroke: #083a57;
    stroke-width: 1.4;
}
.ceiling .block {
    fill: #0b4a6e;
}
.ceiling .duct-edge {
    stroke: #17272f;
    stroke-width: 5;
}
.ceiling .duct {
    stroke: #b6a98e;
    stroke-width: 2;
    stroke-dasharray: 1 1;
}
.ceiling .spots {
    stroke: #c3a55c;
    stroke-width: 2;
}
.cube path {
    fill: #fafdfe;
    stroke: #58a9b3;
}
.cube .cube-edge {
    fill: none;
    stroke: #168490;
    stroke-width: 2;
}
.face {
    fill: #168490;
    font-size: 11px;
    font-weight: bold;
}
.face-small { font-size: 8px; }
.axis-z {
    fill: #e8262b;
    font-size: 10px;
}
.axis-x {
    fill: #b28b37;
    font-size: 10px;
    font-weight: bold;
}
.stage-top {
    position: relative;
    display: flex;
    align-items: flex-start;
}
.expand {
    width: 32px;
    height: 25px;
    background: #fdf6ee;
    color: #555;
}
.expand svg {
    stroke-width: 1.5;
}
.view-tools {
    display: flex;
    gap: 1px;
    margin-left: 76px;
    padding-top: 8px;
    font-size: 9px;
    color: #444;
}
.view-tools button {
    flex-direction: column;
    width: 36px;
    gap: 7px;
    line-height: 14px;
    white-space: nowrap;
}
.view-tools svg {
    width: 15px;
    height: 15px;
}
.right-handle {
    position: absolute;
    right: -1px;
    top: 46%;
    width: 14px;
    height: 71px;
    background: #fea83c;
    color: #fff;
    font-size: 18px;
}
.stage-bar {
    display: flex;
    justify-content: space-between;
    align-items: center;
    flex: none;
    height: 40px;
    padding: 0 21px 0 25px;
    background: #f7fafd;
    color: #333;
}
.stage-bar button {
    width: 16px;
}
.stage-bar svg {
    width: 15px;
    height: 15px;
}
.stage-bar .two-d {
    font-size: 11px;
    color: #666;
}

.taskbar {
    display: flex;
    flex: none;
    height: 6px;
    padding: 0 58px 0 234px;
    justify-content: space-between;
    overflow: hidden;
    background: #060606;
    color: #ccc;
    line-height: 14px;
}
.task {
    width: 38px;
    background: #333;
}
```
